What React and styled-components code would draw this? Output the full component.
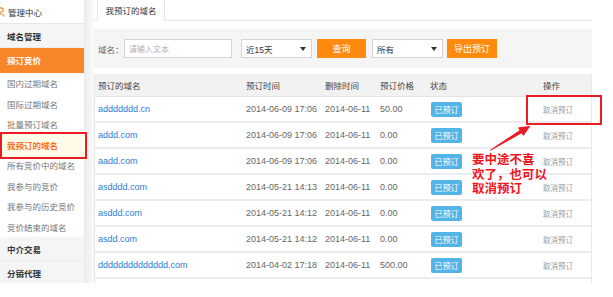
import React from "react";
import styled, { createGlobalStyle } from "styled-components";

const GlobalStyle = createGlobalStyle`
  html, body { margin: 0; padding: 0; background: #fff; }
  body { font-family: "Liberation Sans", "Noto Sans CJK SC", sans-serif; }
  * { box-sizing: border-box; }
`;

const Page = styled.div`
  position: relative;
  display: flex;
  width: 613px;
  height: 283px;
  overflow: hidden;
  background: #fff;
`;

const Sidebar = styled.div`
  width: 84px;
  flex: none;
  display: flex;
  flex-direction: column;
  background: #fff;
  position: relative;
  z-index: 2;
`;

const TopRow = styled.div`
  height: 24px;
  display: flex;
  align-items: center;
  gap: 3px;
  border-bottom: 1px solid #e6e6e6;
  font-size: 8.5px;
  color: #333;
  flex: none;
`;

const Section = styled.div`
  height: ${(p) => p.h}px;
  display: flex;
  align-items: center;
  padding-left: 7px;
  font-size: 8.5px;
  font-weight: bold;
  flex: none;
  background: ${(p) => (p.active ? "#f8872c" : "#f5f5f5")};
  color: ${(p) => (p.active ? "#fff" : "#333")};
  border-bottom: 1px solid ${(p) => (p.active ? "#f8872c" : "#ebebeb")};
`;

const SubItem = styled.div`
  height: 20.5px;
  display: flex;
  align-items: center;
  padding-left: 7px;
  font-size: 8.5px;
  flex: none;
  position: relative;
  color: ${(p) => (p.active ? "#f5731c" : "#777")};
  font-weight: ${(p) => (p.active ? "bold" : "normal")};
`;

const ActiveBox = styled.span`
  position: absolute;
  left: 0;
  right: -3px;
  top: -2.5px;
  bottom: -4px;
  background: #fffbe8;
  border: 2px solid #ec1c24;
  z-index: 0;
`;

const Label = styled.span`
  position: relative;
  z-index: 1;
`;

const Gutter = styled.div`
  width: 10px;
  flex: none;
  background: linear-gradient(to right, #ececec, #f4f4f4 60%, #fbfbfb);
`;

const Main = styled.div`
  width: 498px;
  flex: none;
  display: flex;
  flex-direction: column;
`;

const TabStrip = styled.div`
  height: 21px;
  display: flex;
  align-items: flex-end;
  padding-left: 3px;
  border-bottom: 1px solid #e6e6e6;
  flex: none;
`;

const Tab = styled.div`
  width: 68px;
  height: 22px;
  margin-bottom: -1px;
  background: #fff;
  border: 1px solid #e6e6e6;
  border-bottom-color: #fff;
  border-top: none;
  display: flex;
  align-items: center;
  justify-content: center;
  font-size: 8.5px;
  color: #333;
`;

const FilterBar = styled.div`
  margin-top: 8px;
  height: 39px;
  background: #f5f5f5;
  display: flex;
  align-items: center;
  padding-left: 4px;
  flex: none;
`;

const FilterLabel = styled.span`
  width: 26px;
  font-size: 8.5px;
  color: #666;
`;

const Input = styled.div`
  width: 108px;
  height: 19px;
  border: 1px solid #d4d4d4;
  background: #fff;
  display: flex;
  align-items: center;
  padding-left: 4px;
  font-size: 8px;
  color: #b0b0b0;
  margin-right: 9px;
`;

const Select = styled.div`
  width: 71px;
  height: 19px;
  border: 1px solid #d4d4d4;
  background: #fff;
  display: flex;
  align-items: center;
  justify-content: space-between;
  padding: 0 5px 0 4px;
  font-size: 8.5px;
  color: #333;
  margin-right: ${(p) => p.mr}px;
`;

const Caret = styled.span`
  width: 0;
  height: 0;
  border-left: 3px solid transparent;
  border-right: 3px solid transparent;
  border-top: 4px solid #333;
`;

const Button = styled.div`
  width: ${(p) => p.w}px;
  height: 19px;
  background: #ff8a0d;
  color: #fff;
  display: flex;
  align-items: center;
  justify-content: center;
  font-size: 9px;
  margin-right: ${(p) => p.mr || 0}px;
`;

const Table = styled.div`
  margin-top: 6px;
  border-left: 1px solid #e8e8e8;
  border-right: 1px solid #e8e8e8;
  flex: none;
`;

const Row = styled.div`
  display: grid;
  grid-template-columns: 148px 79px 55px 50px 113px 1fr;
  height: ${(p) => (p.head ? 23 : 26)}px;
  align-items: center;
  background: ${(p) => (p.head ? "#f2f2f2" : "#fff")};
  border-bottom: ${(p) => (p.head ? "1px solid #e4e4e4" : "2px solid #ececec")};
  & > * { padding-left: 3px; }
`;

const HeadCell = styled.div`
  font-size: 8.5px;
  color: #444;
`;

const Cell = styled.div`
  font-size: 9px;
  color: ${(p) => (p.link ? "#2d7bd6" : "#666")};
  white-space: nowrap;
`;

const BadgeCell = styled.div`
  display: flex;
  align-items: center;
`;

const Badge = styled.span`
  width: 31px;
  height: 15px;
  border-radius: 2px;
  background: #53b4e8;
  color: #fff;
  font-size: 8px;
  display: flex;
  align-items: center;
  justify-content: center;
  margin-left: 1px;
`;

const Cancel = styled.div`
  font-size: 7.5px;
  color: #999;
`;

const Callout = styled.div`
  position: absolute;
  left: 526px;
  top: 95px;
  width: 76px;
  height: 30px;
  border: 2px solid #ec1c24;
  z-index: 3;
`;

const ArrowSvg = styled.svg`
  position: absolute;
  left: 486px;
  top: 120px;
  z-index: 3;
`;

const Note = styled.div`
  position: absolute;
  left: 472px;
  top: 153px;
  font-size: 12.5px;
  line-height: 14.5px;
  font-weight: bold;
  color: #f0151b;
  z-index: 3;
`;

const subItems = [
  "国内过期域名",
  "国际过期域名",
  "批量预订域名",
  "我预订的域名",
  "所有竞价中的域名",
  "我参与的竞价",
  "我参与的历史竞价",
  "竞价结束的域名",
];

const rows = [
  ["addddddd.cn", "2014-06-09 17:06", "2014-06-11", "50.00"],
  ["addd.com", "2014-06-09 17:06", "2014-06-11", "0.00"],
  ["aadd.com", "2014-06-09 17:06", "2014-06-11", "0.00"],
  ["asdddd.com", "2014-05-21 14:13", "2014-06-11", "0.00"],
  ["asddd.com", "2014-05-21 14:12", "2014-06-11", "0.00"],
  ["asdd.com", "2014-05-21 14:12", "2014-06-11", "0.00"],
  ["dddddddddddddd.com", "2014-04-02 17:18", "2014-06-11", "500.00"],
];

const UserIcon = () => (
  <svg width="8" height="10" viewBox="0 0 8 10" style={{ marginLeft: -3 }}>
    <circle cx="4" cy="3" r="2.2" fill="none" stroke="#f08a2c" strokeWidth="1.2" />
    <path d="M0.5 9.5 Q4 4.5 7.5 9.5" fill="none" stroke="#f08a2c" strokeWidth="1.2" />
  </svg>
);

export default function App() {
  return (
    <>
      <GlobalStyle />
      <Page>
        <Sidebar>
          <TopRow>
            <UserIcon />
            <span>管理中心</span>
          </TopRow>
          <Section h={24}>域名管理</Section>
          <Section h={25} active>
            预订竞价
          </Section>
          {subItems.map((t, i) => (
            <SubItem key={t} active={i === 3}>
              {i === 3 && <ActiveBox />}
              <Label>{t}</Label>
            </SubItem>
          ))}
          <Section h={24}>中介交易</Section>
          <Section h={24}>分销代理</Section>
        </Sidebar>
        <Gutter />
        <Main>
          <TabStrip>
            <Tab>我预订的域名</Tab>
          </TabStrip>
          <FilterBar>
            <FilterLabel>域名：</FilterLabel>
            <Input>请输入文本</Input>
            <Select mr={5}>
              <span>近15天</span>
              <Caret />
            </Select>
            <Button w={49} mr={6}>
              查询
            </Button>
            <Select mr={4}>
              <span>所有</span>
              <Caret />
            </Select>
            <Button w={50}>导出预订</Button>
          </FilterBar>
          <Table>
            <Row head>
              <HeadCell>预订的域名</HeadCell>
              <HeadCell>预订时间</HeadCell>
              <HeadCell>删除时间</HeadCell>
              <HeadCell>预订价格</HeadCell>
              <HeadCell>状态</HeadCell>
              <HeadCell>操作</HeadCell>
            </Row>
            {rows.map((r, i) => (
              <Row key={i}>
                <Cell link>{r[0]}</Cell>
                <Cell>{r[1]}</Cell>
                <Cell>{r[2]}</Cell>
                <Cell>{r[3]}</Cell>
                <BadgeCell>
                  <Badge>已预订</Badge>
                </BadgeCell>
                <Cancel>取消预订</Cancel>
              </Row>
            ))}
            <Row>
              <Cell />
              <Cell />
              <Cell />
              <Cell />
              <BadgeCell>
                <Badge />
              </BadgeCell>
              <Cancel />
            </Row>
          </Table>
        </Main>
        <Callout />
        <ArrowSvg width="48" height="34" viewBox="486 120 48 34">
          <polygon
            points="490,150 519.6,130.2 517.8,127.6 530.5,125.8 523.4,136.0 521.6,133.2 490.6,150.8"
            fill="#ec1c24"
          />
        </ArrowSvg>
        <Note>
          要中途不喜
          <br />
          欢了，也可以
          <br />
          取消预订
        </Note>
      </Page>
    </>
  );
}
